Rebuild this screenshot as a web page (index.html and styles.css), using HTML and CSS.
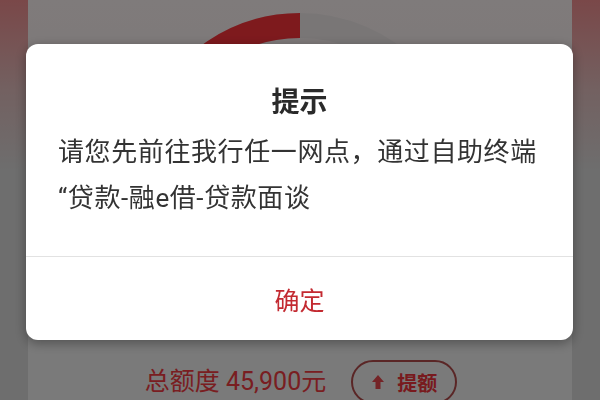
FILE: index.html
```html
<!DOCTYPE html>
<html lang="zh-CN">
<head>
<meta charset="utf-8">
<title>提示</title>
<link rel="stylesheet" href="styles.css">
</head>
<body>
<div class="page">
  <div class="card">
    <svg class="gauge" width="544" height="352" viewBox="0 0 544 352">
      <path d="M162.8 289.2 A154.5 154.5 0 1 1 381.2 289.2" fill="none" stroke="#f3eded" stroke-width="25"/>
      <path d="M162.8 289.2 A154.5 154.5 0 0 1 272 25.5" fill="none" stroke="#fd343b" stroke-width="25"/>
    </svg>
    <div class="summary">
      <span class="total">总额度 45,900元</span>
      <span class="raise">
        <svg class="arrow" width="12" height="14" viewBox="0 0 12 14"><path d="M6 0 L12 7 H8.5 V14 H3.5 V7 H0 Z" fill="#e8484e"/></svg>
        <span class="raise-label">提额</span>
      </span>
    </div>
  </div>
</div>
<div class="overlay"></div>
<div class="dialog">
  <div class="dialog-body">
    <h2 class="title">提示</h2>
    <p class="message">请您先前往我行任一网点，通过自助终端“贷款-融e借-贷款面谈</p>
  </div>
  <div class="dialog-actions">
    <button class="confirm">确定</button>
  </div>
</div>
</body>
</html>
```

FILE: styles.css
```css
html, body {
  margin: 0;
  padding: 0;
  width: 600px;
  height: 400px;
  overflow: hidden;
  font-family: Roboto, "Noto Sans CJK SC", sans-serif;
}

.page {
  height: 400px;
  padding: 0 28px;
  background: linear-gradient(180deg, #f49092 0px, #e6c2c2 90px, #dcdcdc 170px, #dcdcdc 400px);
  box-sizing: border-box;
}

.card {
  height: 400px;
  background: linear-gradient(180deg, #fff6f6 0px, #f8f2f2 120px, #f4f4f4 220px);
  display: flex;
  flex-direction: column;
  align-items: center;
}

.gauge {
  display: block;
  flex: none;
}

.summary {
  display: flex;
  align-items: center;
  justify-content: center;
  gap: 25px;
  margin-top: 8px;
  margin-left: 2px;
  white-space: nowrap;
}

.total {
  font-size: 25px;
  color: #f23c42;
  line-height: 44px;
}

.raise {
  display: flex;
  align-items: center;
  gap: 13px;
  height: 44px;
  padding: 0 18px 0 19px;
  border: 2px solid #b44c4c;
  border-radius: 24px;
  box-sizing: border-box;
  font-size: 20px;
  font-weight: bold;
  color: #f0353c;
  white-space: nowrap;
  flex: none;
}

.raise-label {
  font-family: "Noto Sans CJK SC", sans-serif;
}

.arrow {
  display: block;
  flex: none;
}

.overlay {
  position: fixed;
  inset: 0;
  background: rgba(0, 0, 0, 0.5);
}

.dialog {
  position: fixed;
  top: 44px;
  left: 26px;
  width: 547px;
  height: 296px;
  background: #ffffff;
  border-radius: 12px;
  box-shadow: 0 3px 12px rgba(0, 0, 0, 0.35);
  display: flex;
  flex-direction: column;
  overflow: hidden;
}

.dialog-body {
  padding: 39px 32px 0 32px;
  height: 213px;
  box-sizing: border-box;
  border-bottom: 1px solid #e2e2e2;
}

.title {
  margin: 0;
  font-family: "Noto Sans CJK SC", sans-serif;
  font-size: 28px;
  line-height: 34px;
  font-weight: bold;
  color: #2a2a2a;
  text-align: center;
}

.message {
  margin: 12px 0 0 0;
  font-size: 26px;
  letter-spacing: 0.6px;
  line-height: 46px;
  color: #333333;
}

.dialog-actions {
  flex: 1;
  display: flex;
}

.confirm {
  flex: 1;
  border: none;
  background: transparent;
  font-family: "Noto Sans CJK SC", sans-serif;
  font-size: 25px;
  color: #c32a31;
  padding: 0;
  cursor: pointer;
}
```
